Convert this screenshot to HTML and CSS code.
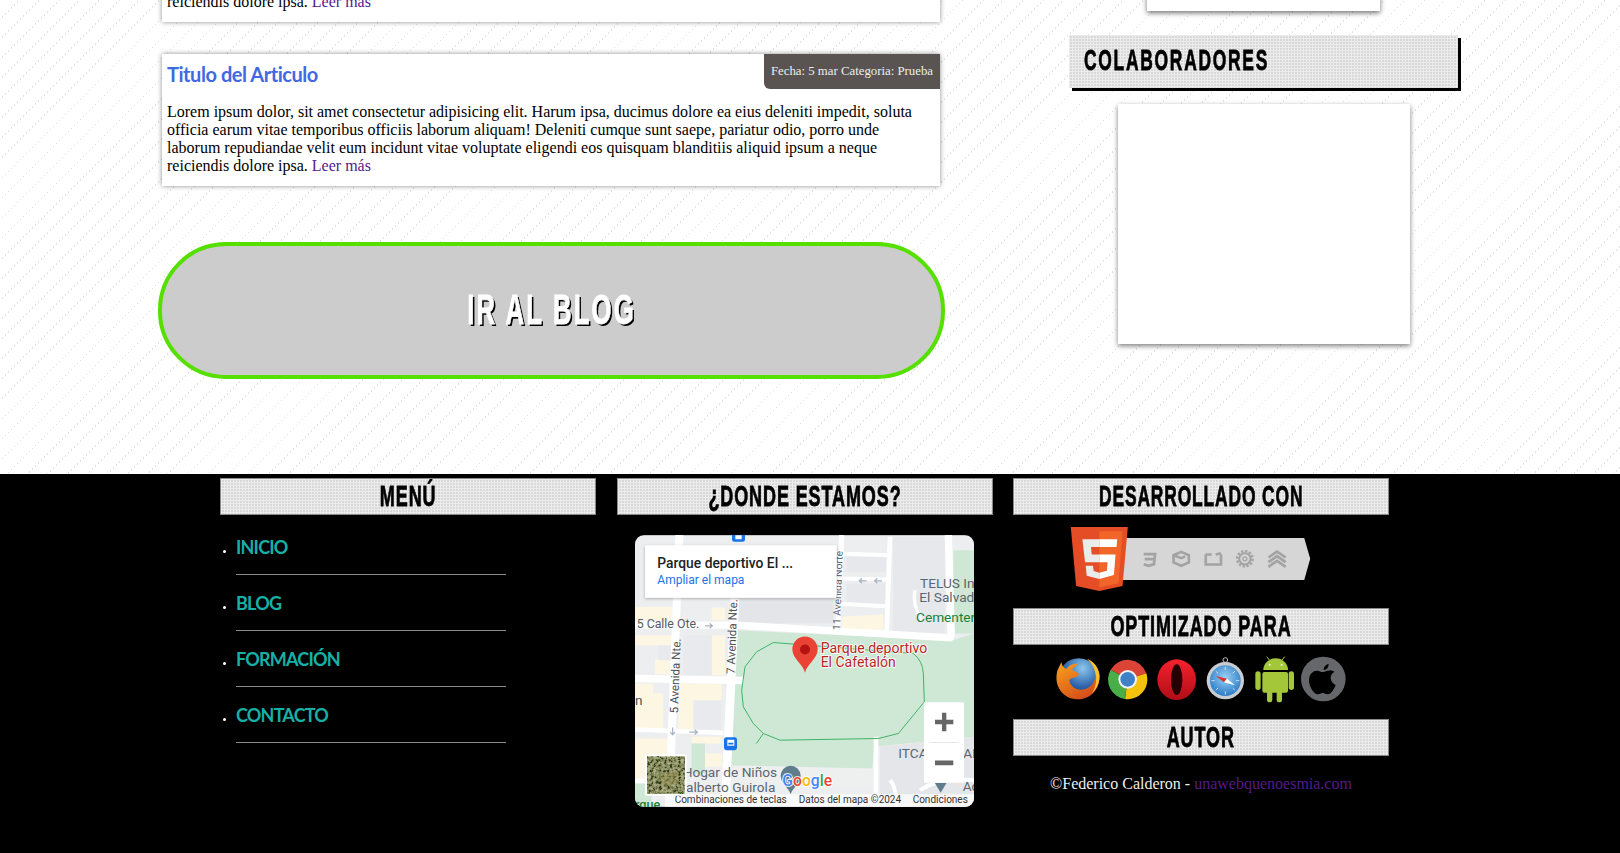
FILE: index.html
```html
<!DOCTYPE html>
<html lang="es">

<head>
    <meta charset="UTF-8">
    <meta name="viewport" content="width=device-width, initial-scale=1.0">
    <title>Inicio</title>
    <link rel="stylesheet" href="styles.css">
</head>

<body>
    <div id="contenido">
        <!-- articulos -->
        <div id="principal">
            <div class="articulo primero">
                <div class="articulo-top">
                    <h2><a href="#">Titulo del Articulo</a></h2>
                    <span class="meta">Fecha: 5 mar Categoria: Prueba</span>
                </div>
                <p>Lorem ipsum dolor, sit amet consectetur adipisicing elit. Harum ipsa, ducimus dolore ea eius deleniti impedit, soluta officia earum vitae temporibus officiis laborum aliquam! Deleniti cumque sunt saepe, pariatur odio, porro unde laborum repudiandae velit eum incidunt vitae voluptate eligendi eos quisquam blanditiis aliquid ipsum a neque reiciendis dolore ipsa. <a href="#" class="leer">Leer más</a></p>
            </div>
            <div class="articulo">
                <div class="articulo-top">
                    <h2><a href="#">Titulo del Articulo</a></h2>
                    <span class="meta">Fecha: 5 mar Categoria: Prueba</span>
                </div>
                <p>Lorem ipsum dolor, sit amet consectetur adipisicing elit. Harum ipsa, ducimus dolore ea eius deleniti impedit, soluta officia earum vitae temporibus officiis laborum aliquam! Deleniti cumque sunt saepe, pariatur odio, porro unde laborum repudiandae velit eum incidunt vitae voluptate eligendi eos quisquam blanditiis aliquid ipsum a neque reiciendis dolore ipsa. <a href="#" class="leer">Leer más</a></p>
            </div>
            <a href="#" class="boton-blog"><span>IR AL BLOG</span></a>
        </div>

        <!-- barra lateral -->
        <div id="lateral">
            <div class="caja-arriba"></div>
            <h3 class="titulo-lateral"><span>COLABORADORES</span></h3>
            <div class="caja-blanca"></div>
        </div>
    </div>

    <div id="pie">
        <div class="pie-grid">
            <div class="pie-col">
                <h4 class="titulo-pie"><span>MENÚ</span></h4>
                <ul class="menu-pie">
                    <li><a href="#">INICIO</a></li>
                    <li><a href="#">BLOG</a></li>
                    <li><a href="#">FORMACIÓN</a></li>
                    <li><a href="#">CONTACTO</a></li>
                </ul>
            </div>

            <div class="pie-col">
                <h4 class="titulo-pie"><span>¿DONDE ESTAMOS?</span></h4>
                <!-- mapa -->
                <svg class="mapa" viewBox="45 45 1017 815" width="339" height="272">
                    <defs>
                        <filter id="satelite" x="0" y="0" width="100%" height="100%">
                            <feTurbulence type="fractalNoise" baseFrequency="0.12" numOctaves="3" seed="4"/>
                            <feColorMatrix type="matrix" values="0 0 0 2.2 -0.75  0 0 0 2.2 -0.7  0 0 0 1.6 -0.6  0 0 0 0 1"/>
                        </filter>
                        <filter id="sombra" x="-5%" y="-10%" width="110%" height="125%">
                            <feDropShadow dx="0" dy="3" stdDeviation="4" flood-opacity=".3"/>
                        </filter>
                    </defs>
                    <rect x="45" y="45" width="1017" height="815" fill="#eceef0"/>
                    <!-- manzanas -->
                    <g fill="#fdf6e3">
                        <path d="M45 260h115v40H45zM275 262h40v38h-40zM45 345h115v30H45zM105 418h70v45h-70zM275 345h40v120h-40z"/>
                        <path d="M175 490h130v140H175zM45 490h55v30h30v110H45zM45 655h100v120H45zM215 650h90v20h-90zM255 700h50v40h-50z"/>
                        <path d="M665 290l125-8v58l-125-10z"/>
                        <path d="M330 735l430 10v60H330z" fill="#eef0f0"/>
                    </g>
                    <path d="M220 540h85v90h-85zM115 375h45v45h-45zM190 345h85v120h-85z" fill="#e8eaed"/>
                    <path d="M215 670h40v90h-40z" fill="#cfe8d5"/>
                    <path d="M350 235h290v75H350z" fill="#e3e5e8"/>
                    <path d="M680 110h118v45H680zM680 190h115v60H680zM820 50h155v290H820z" fill="#e6e8eb"/>
                    <!-- parque -->
                    <path d="M338 330l660 30 64-20v310l-300 30-5 65-440-10z" fill="#cfe8d5"/>
                    <path d="M1000 90h62v250h-62z" fill="#cfe8d5"/>
                    <path d="M780 680l282-30v210H780z" fill="#e4e6ea"/>
                    <path d="M45 790h50v70H45z" fill="#cfe8d5"/>
                    <!-- calles -->
                    <g fill="none" stroke="#fff">
                        <path d="M45 315h305l640 38q5-4 3-30L985 45" stroke-width="22"/>
                        <path d="M345 235L315 860" stroke-width="26"/>
                        <path d="M178 45L150 780" stroke-width="24"/>
                        <path d="M665 45l-12 290" stroke-width="16"/>
                        <path d="M45 475l325 6" stroke-width="22"/>
                        <path d="M45 628l265 10" stroke-width="14"/>
                        <path d="M45 782h110" stroke-width="14"/>
                        <path d="M650 100l155 5M650 175l150 3M650 250l145 8" stroke-width="12"/>
                        <path d="M810 50l-10 285" stroke-width="14"/>
                        <path d="M768 650v210" stroke-width="14"/>
                        <path d="M810 780q20 20 18 80M900 810q60-40 162-30" stroke-width="12"/>
                        <path d="M885 210q-10 40 20 90" stroke-width="10"/>
                    </g>
                    <!-- flechas -->
                    <g fill="none" stroke="#a9b4c4" stroke-width="4">
                        <path d="M255 317h22m-8-7l8 7-8 7M718 182h22m-14-7l-8 7 8 7M764 182h22m-14-7l-8 7 8 7M208 636h24m-8-7l8 7-8 7M158 622v22m-7-8l7 8 7-8"/>
                    </g>
                    <!-- pista -->
                    <path d="M880 400q28 22 30 60l3 85-78 95-60 15-295 5-50-20-30-30-30-50-5-50 10-70 35-45 50-28zM430 640l-21 30" fill="none" stroke="#3fb368" stroke-width="3"/>
                    <!-- textos -->
                    <g font-family="Roboto, sans-serif" font-size="41" fill="#5b6670">
                        <text x="50" y="325" font-size="37" fill="#555c63">5 Calle Ote.</text>
                        <text transform="translate(344 462) rotate(-88)" font-size="35" fill="#4d5156">7 Avenida Nte.</text>
                        <text transform="translate(174 580) rotate(-88)" font-size="35" fill="#4d5156">5 Avenida Nte.</text>
                        <text transform="translate(660 330) rotate(-88)" font-size="31">11 Avenida Norte</text>
                        <text x="900" y="203">TELUS In</text>
                        <text x="898" y="245">El Salvad</text>
                        <text x="888" y="305" fill="#188038">Cementer</text>
                        <text x="45" y="555" fill="#4d5156">n</text>
                        <text x="835" y="715">ITCA</text>
                        <text x="1030" y="715">AD</text>
                        <text x="1028" y="812">Ac</text>
                        <text x="188" y="772">Hogar de Niños</text>
                        <text x="198" y="815">alberto Guirola</text>
                        <text x="45" y="866" font-size="38" fill="#188038" font-weight="500">rque</text>
                    </g>
                    <g font-family="Roboto, sans-serif" font-size="42" fill="#b3261e" stroke="#fff" stroke-width="5" paint-order="stroke">
                        <text x="602" y="398">Parque deportivo</text>
                        <text x="602" y="441">El Cafetalón</text>
                    </g>
                    <!-- marcador -->
                    <path d="M555 458c-6-28-38-42-38-71a38 38 0 0 1 76 0c0 29-32 43-38 71z" fill="#ea4335"/>
                    <circle cx="555" cy="388" r="15" fill="#b31412"/>
                    <!-- buses -->
                    <g fill="#1a73e8">
                        <rect x="312" y="651" width="39" height="39" rx="7"/>
                        <rect x="336" y="30" width="39" height="35" rx="7"/>
                    </g>
                    <path d="M322 659h21v18h-21zM346 45h19v12h-19z" fill="#fff"/>
                    <path d="M325 668h15v5h-15z" fill="#1a73e8"/>
                    <!-- pin gris y logo -->
                    <path d="M512 822c-5-18-30-32-30-55a30 30 0 0 1 60 0c0 23-25 37-30 55z" fill="#5f7d8c"/>
                    <path d="M962 818l-18-30h36z" fill="#5f7d8c"/>
                    <text x="487" y="797" font-family="Roboto, sans-serif" font-size="47" font-weight="500" stroke="#fff" stroke-width="5" paint-order="stroke"><tspan fill="#4285f4">G</tspan><tspan fill="#ea4335">o</tspan><tspan fill="#fbbc05">o</tspan><tspan fill="#4285f4">g</tspan><tspan fill="#34a853">l</tspan><tspan fill="#ea4335">e</tspan></text>
                    <!-- barra inferior -->
                    <rect x="135" y="822" width="927" height="38" fill="#fff" fill-opacity=".72"/>
                    <g font-family="Roboto, sans-serif" font-size="30" fill="#333">
                        <text x="164" y="848">Combinaciones de teclas</text>
                        <text x="536" y="848">Datos del mapa ©2024</text>
                        <text x="878" y="848">Condiciones</text>
                    </g>
                    <!-- tarjeta del lugar -->
                    <rect x="75" y="75" width="575" height="158" rx="3" fill="#fff" filter="url(#sombra)"/>
                    <text x="112" y="143" font-family="Roboto, sans-serif" font-size="41.5" font-weight="500" fill="#202124">Parque deportivo El ...</text>
                    <text x="112" y="193" font-family="Roboto, sans-serif" font-size="36" fill="#1a73e8">Ampliar el mapa</text>
                    <!-- zoom -->
                    <rect x="912" y="546" width="120" height="242" rx="3" fill="#fff"/>
                    <path d="M927 667h90" stroke="#e6e6e6" stroke-width="3"/>
                    <path d="M945 599h21v-21h13v21h21v13h-21v21h-13v-21h-21zM945 721h55v14h-55z" fill="#666"/>
                    <!-- miniatura satelite -->
                    <rect x="75" y="703" width="125" height="124" rx="3" fill="#fff"/>
                    <rect x="81" y="709" width="113" height="112" fill="#6b6a44"/>
                    <rect x="81" y="709" width="113" height="112" filter="url(#satelite)" opacity=".5"/>
                    <path d="M115 760l55-8 8 40-50 6z" fill="#9a9458" opacity=".5"/>
                </svg>
            </div>

            <div class="pie-col">
                <h4 class="titulo-pie"><span class="mas-estrecho">DESARROLLADO CON</span></h4>
                <svg class="html5" viewBox="60 20 722 193" width="241" height="64">
                    <path d="M225 53H764L782 116L764 180H215z" fill="#d6d6d6"/>
                    <path d="M60 20H232L216 198L146 213L76 198z" fill="#e44d26"/>
                    <path d="M146 33H216L204 190L146 202z" fill="#f16529"/>
                    <path d="M95 57H146V80H121L123 103H146V126H103zM105 137H127L129 153L146 158V177L108 167z" fill="#ebebeb"/>
                    <path d="M146 57H200L198 80H146zM146 103H195L190 165L146 177V158L169 152L171 126H146z" fill="#fff"/>
                    <g fill="none" stroke="#a3a3a3" stroke-width="8">
                        <path d="M280 102h34l-3 30-16 5-15-5M283 117h28"/>
                        <path d="M393 95l23 10v22l-23 10-23-10v-22zM370 105l23 9 12-5"/>
                        <path d="M467 102v31h46v-31M467 103h18M497 103l16-4"/>
                        <circle cx="585" cy="116" r="23" stroke-dasharray="7 5"/>
                        <circle cx="585" cy="116" r="17" stroke-width="6"/>
                        <circle cx="585" cy="116" r="6" stroke-width="4"/>
                        <path d="M656 112l26-18 26 18M656 126l26-18 26 18M656 140l26-18 26 18"/>
                    </g>
                </svg>

                <h4 class="titulo-pie"><span>OPTIMIZADO PARA</span></h4>
                <svg class="navegadores" viewBox="0 0 930 180" width="310" height="60">
                    <defs>
                        <radialGradient id="ffGlobo" cx=".6" cy=".25" r=".8">
                            <stop offset="0" stop-color="#8cc8ec"/>
                            <stop offset=".6" stop-color="#2a5fa8"/>
                            <stop offset="1" stop-color="#123a7a"/>
                        </radialGradient>
                        <linearGradient id="ffZorro" x1=".2" y1="0" x2=".8" y2="1">
                            <stop offset="0" stop-color="#f7a11c"/>
                            <stop offset="1" stop-color="#d2441a"/>
                        </linearGradient>
                        <linearGradient id="opRojo" x1="0" y1="0" x2="0" y2="1">
                            <stop offset="0" stop-color="#f5222e"/>
                            <stop offset="1" stop-color="#b00d16"/>
                        </linearGradient>
                        <radialGradient id="safAzul" cx=".5" cy=".4" r=".6">
                            <stop offset="0" stop-color="#9bd0f3"/>
                            <stop offset="1" stop-color="#2a7cc8"/>
                        </radialGradient>
                    </defs>
                    <!-- firefox -->
                    <circle cx="86" cy="85" r="60" fill="url(#ffGlobo)"/>
                    <path d="M112 27C140 38 152 68 148 88C146 120 120 148 86 148C40 148 10 110 22 62L34 36C36 48 42 56 50 56C58 46 70 40 84 42L66 58C72 66 84 66 88 74C78 84 62 82 58 90C60 110 82 124 104 118C122 112 134 98 136 78C136 58 126 40 112 27z" fill="url(#ffZorro)"/>
                    <path d="M112 27C140 38 152 68 148 88C146 105 136 122 124 132C136 116 140 96 138 78C136 58 126 40 112 27z" fill="#f9c22e"/>
                    <!-- chrome -->
                    <path d="M233 88L182 59A59 59 0 0 1 289 70z" fill="#db4437"/>
                    <path d="M233 88L289 70A59 59 0 0 1 225 147z" fill="#f4c20d"/>
                    <path d="M233 88L225 147A59 59 0 0 1 182 59z" fill="#4aae48"/>
                    <circle cx="233" cy="88" r="28" fill="#f2f2f2"/>
                    <circle cx="233" cy="88" r="22" fill="#3f82c8"/>
                    <!-- opera -->
                    <ellipse cx="380" cy="89" rx="58" ry="61" fill="url(#opRojo)"/>
                    <ellipse cx="380" cy="89" rx="17" ry="46" fill="#240003"/>
                    <!-- safari -->
                    <circle cx="526" cy="30" r="7" fill="none" stroke="#bbb" stroke-width="3"/>
                    <circle cx="526" cy="92" r="56" fill="#c9ccd0"/>
                    <circle cx="526" cy="92" r="46" fill="url(#safAzul)"/>
                    <path d="M526 50v10M526 124v10M484 92h10M558 92h10M497 63l7 7M555 121l-7-7M555 63l-7 7M497 121l7-7" stroke="#fff" stroke-width="2"/>
                    <path d="M497 78L531 86L522 97z" fill="#d9342b"/>
                    <path d="M555 106L531 86L522 97z" fill="#fff"/>
                    <!-- android -->
                    <g fill="#a4c639">
                        <path d="M640 60a36 34 0 0 1 74 0z"/>
                        <rect x="637" y="66" width="77" height="62" rx="6"/>
                        <rect x="616" y="64" width="16" height="56" rx="8"/>
                        <rect x="716" y="64" width="16" height="56" rx="8"/>
                        <rect x="651" y="120" width="16" height="37" rx="8"/>
                        <rect x="680" y="120" width="16" height="37" rx="8"/>
                    </g>
                    <path d="M658 30l-8-10M696 30l8-10" stroke="#a4c639" stroke-width="3"/>
                    <circle cx="659" cy="44" r="3" fill="#fff"/>
                    <circle cx="695" cy="44" r="3" fill="#fff"/>
                    <!-- apple -->
                    <circle cx="820" cy="87" r="67" fill="#66676b"/>
                    <path d="M835 62c-8 0-12 4-17 4c-5 0-10-4-17-4c-12 0-24 10-24 29c0 20 15 42 26 42c6 0 9-4 15-4c7 0 9 4 15 4c11 0 20-17 24-28c-9-4-15-12-15-21c0-9 5-15 11-19c-4-3-11-4-18-3zM836 42c-7 1-15 8-15 18c9 0 15-9 15-18z" fill="#000"/>
                </svg>

                <h4 class="titulo-pie"><span>AUTOR</span></h4>
                <p class="autor">©Federico Calderon - <a href="#">unawebquenoesmia.com</a></p>
            </div>
        </div>
    </div>
</body>

</html>
```

FILE: styles.css
```css
* {
    margin: 0;
    padding: 0;
    box-sizing: border-box;
}

html,
body {
    height: 853px;
    overflow: hidden;
}

body {
    font-family: "Liberation Serif", serif;
    font-size: 16px;
    background-color: #fff;
    background-image:
        repeating-linear-gradient(90deg, #fff 0, #fff 2px, transparent 2px, transparent 3px),
        repeating-linear-gradient(135deg, transparent 0, transparent 13px, #e2e2e2 13px, #e2e2e2 14.2px);
}

a {
    text-decoration: none;
}

#contenido {
    display: flex;
    height: 474px;
    padding-left: 158px;
}

#principal {
    width: 787px;
}

.articulo {
    margin: 0 5px 0 4px;
    height: 132px;
    background-color: #fff;
    box-shadow: 0 0 5px rgba(0, 0, 0, .45);
}

.primero {
    margin-top: -110px;
    margin-bottom: 32px;
}

.articulo-top {
    display: flex;
    justify-content: space-between;
    align-items: flex-start;
    height: 49px;
}

.articulo h2 {
    font-family: Lato, sans-serif;
    font-size: 20px;
    line-height: 24px;
    font-weight: 700;
    letter-spacing: -.45px;
    margin: 8px 0 0 5px;
}

.articulo h2 a {
    color: #4169e1;
}

.meta {
    height: 35px;
    line-height: 34px;
    padding: 0 7px;
    font-size: 12.8px;
    color: #eee;
    background-color: #595451;
    border-bottom-left-radius: 6px;
}

.articulo p {
    padding: 0 5px;
    line-height: 18px;
    color: #000;
}

.leer {
    color: #551a8b;
}

.boton-blog {
    display: flex;
    align-items: center;
    justify-content: center;
    height: 137px;
    margin-top: 56px;
    background-color: #ccc;
    border: 4px solid #55e000;
    border-radius: 68px;
}

.boton-blog span {
    display: inline-block;
    margin-top: -3px;
    font-family: "Liberation Sans Narrow", "Liberation Sans", sans-serif;
    font-size: 43px;
    font-weight: 700;
    letter-spacing: 3.5px;
    color: #fff;
    -webkit-text-stroke: .8px #fff;
    text-shadow: 3px 2px 0 #000;
    transform: scaleX(.6);
}

#lateral {
    width: 389px;
    margin-left: 124px;
    display: flex;
    flex-direction: column;
    align-items: center;
}

.caja-arriba {
    width: 233px;
    height: 100px;
    margin-top: -89px;
    background-color: #fff;
    box-shadow: 0 2px 5px rgba(0, 0, 0, .55);
}

.titulo-lateral,
.titulo-pie {
    font-family: "Liberation Sans Narrow", "Liberation Sans", sans-serif;
    font-weight: 700;
    color: #000;
    background-color: #d8d8d8;
    background-image:
        linear-gradient(#ececec 1px, transparent 1px),
        linear-gradient(90deg, #ececec 1px, transparent 1px);
    background-size: 3px 3px;
}

.titulo-lateral {
    width: 389px;
    height: 53px;
    margin-top: 24px;
    padding-left: 15px;
    font-size: 30px;
    line-height: 50px;
    box-shadow: 3px 3px 0 #000;
}

.titulo-lateral span {
    display: inline-block;
    letter-spacing: 3px;
    -webkit-text-stroke: .8px #000;
    transform: scaleX(.58);
    transform-origin: left;
}

.caja-blanca {
    width: 292px;
    height: 240px;
    margin-top: 16px;
    background-color: #fff;
    box-shadow: 0 2px 5px rgba(0, 0, 0, .5);
}

#pie {
    height: 379px;
    background-color: #000;
    padding: 4px 0 0 220px;
}

.pie-grid {
    display: grid;
    grid-template-columns: repeat(3, 376px);
    column-gap: 20.5px;
}

.titulo-pie {
    height: 37px;
    font-size: 30px;
    line-height: 33px;
    text-align: center;
    border: 1px solid #8a8a8a;
}

.titulo-pie span {
    display: inline-block;
    letter-spacing: 1.5px;
    -webkit-text-stroke: .8px #000;
    transform: scaleX(.6);
}

.titulo-pie .mas-estrecho {
    transform: scaleX(.58);
}

.menu-pie {
    width: 286px;
    padding-left: 16px;
    margin-top: 4px;
    color: #fff;
}

.menu-pie li {
    height: 56px;
    padding-top: 13px;
    border-bottom: 1px solid #8a8a8a;
    font-size: 11px;
    line-height: 30px;
}

.menu-pie a {
    font-family: Lato, sans-serif;
    font-size: 18px;
    font-weight: 700;
    letter-spacing: -.8px;
    color: #17b0a7;
}

.mapa {
    display: block;
    margin: 20px auto 0;
    border-radius: 9px;
}

.html5 {
    display: block;
    margin: 12px 0 17px 57px;
}

.navegadores {
    display: block;
    margin: 5px 0 9px 37px;
}

.autor {
    margin-top: 19px;
    line-height: 18px;
    text-align: center;
    color: #eee;
}

.autor a {
    color: #551a8b;
}
```
